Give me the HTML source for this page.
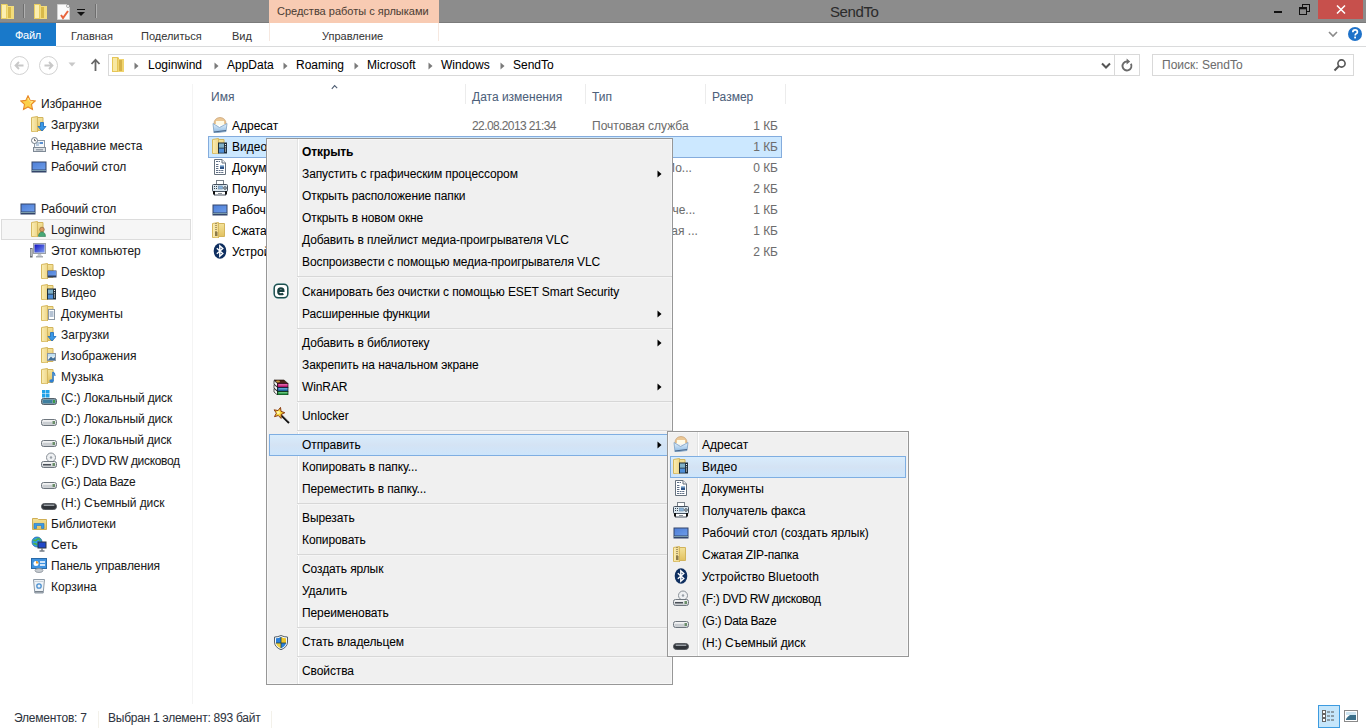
<!DOCTYPE html><html><head><meta charset="utf-8"><style>
html,body{margin:0;padding:0;width:1366px;height:728px;overflow:hidden;background:#fff;}
body{position:relative;font-family:"Liberation Sans",sans-serif;}
.t{position:absolute;white-space:nowrap;line-height:14px;font-family:"Liberation Sans",sans-serif;-webkit-text-stroke:0.05px currentColor;}
svg{display:block}
</style></head><body>
<svg width="0" height="0" style="position:absolute"><defs><linearGradient id="gF" x1="0" x2="1" y1="0" y2="0"><stop offset="0" stop-color="#fbeeb4"/><stop offset="1" stop-color="#eed68a"/></linearGradient><linearGradient id="gB" x1="0" x2="0" y1="0" y2="1"><stop offset="0" stop-color="#f3e29a"/><stop offset="1" stop-color="#e2c160"/></linearGradient><linearGradient id="gD" x1="0" x2="1" y1="0" y2="1"><stop offset="0" stop-color="#4f7fd8"/><stop offset="1" stop-color="#6c9ce8"/></linearGradient><linearGradient id="gDr" x1="0" x2="0" y1="0" y2="1"><stop offset="0" stop-color="#fafafa"/><stop offset="1" stop-color="#c4c8cc"/></linearGradient><linearGradient id="gM" x1="0" x2="0" y1="0" y2="1"><stop offset="0" stop-color="#e6f2fc"/><stop offset="1" stop-color="#86b6e2"/></linearGradient><linearGradient id="gHL" x1="0" x2="0" y1="0" y2="1"><stop offset="0" stop-color="#d8ecfc"/><stop offset=".5" stop-color="#d4e3f4"/><stop offset="1" stop-color="#cde5fb"/></linearGradient></defs></svg>
<div style="position:absolute;left:0px;top:0px;width:1366px;height:23px;background:#8c8c8c"></div>
<div style="position:absolute;left:0px;top:22px;width:1366px;height:1px;background:#7b7b7b"></div>
<svg style="position:absolute;left:0px;top:2px" width="16" height="18" viewBox="0 0 16 18"><path d="M1 2h6l1 1v14H1z" fill="#e9cf62"/><path d="M7 4h7v13H7z" fill="#f3dc7c"/><path d="M2 3h4v13H2z" fill="#fbeeb0"/><path d="M8 5h3v11H8z" fill="#d8b94a"/></svg>
<div style="position:absolute;left:23px;top:4px;width:1px;height:14px;background:#b0b0b0;border-left:1px solid #6e6e6e"></div>
<svg style="position:absolute;left:33px;top:2px" width="16" height="18" viewBox="0 0 16 18"><path d="M1 2h6l1 1v14H1z" fill="#e9cf62"/><path d="M7 4h7v13H7z" fill="#f3dc7c"/><path d="M2 3h4v13H2z" fill="#fbeeb0"/><path d="M8 5h3v11H8z" fill="#d8b94a"/></svg>
<svg style="position:absolute;left:56px;top:3px" width="16" height="18" viewBox="0 0 16 18"><path d="M1.5 1.5h9l3 3v12h-12z" fill="#fafafa" stroke="#d0d0d0"/><path d="M5 12l2 3 5-7" stroke="#e8643c" stroke-width="2" fill="none"/><circle cx="12" cy="3" r="1.5" fill="#fff" stroke="#777" stroke-width=".6"/></svg>
<svg style="position:absolute;left:77px;top:8px" width="9" height="9" viewBox="0 0 9 9"><rect x="0" y="1" width="8" height="1" fill="#111"/><path d="M0 4h8l-4 4z" fill="#111"/></svg>
<div style="position:absolute;left:95px;top:4px;width:1px;height:14px;background:#b0b0b0;border-left:1px solid #6e6e6e"></div>
<div style="position:absolute;left:269px;top:0px;width:170px;height:23px;background:#f8cbb3"></div>
<div class="t" style="left:277px;top:4px;font-size:11px;color:#4e3f36;">Средства работы с ярлыками</div>
<div class="t" style="left:830px;top:5px;font-size:15px;color:#2b2b2b;letter-spacing:-0.4px;">SendTo</div>
<div style="position:absolute;left:1274px;top:11px;width:8px;height:2px;background:#111"></div>
<svg style="position:absolute;left:1299px;top:4px" width="11" height="11" viewBox="0 0 11 11"><rect x="3.5" y="0.5" width="7" height="7" fill="none" stroke="#111"/><rect x="0.5" y="3.5" width="7" height="7" fill="#8c8c8c" stroke="#111"/><rect x="1" y="4" width="6" height="1.3" fill="#111"/></svg>
<div style="position:absolute;left:1318px;top:0px;width:45px;height:19px;background:#c7504c"></div>
<svg style="position:absolute;left:1336px;top:5px" width="10" height="9" viewBox="0 0 10 9"><path d="M1 0.5l8 8M9 0.5l-8 8" stroke="#fff" stroke-width="1.5"/></svg>
<div style="position:absolute;left:0px;top:23px;width:56px;height:23px;background:#1979ca"></div>
<div class="t" style="left:15px;top:28px;font-size:11px;color:#fff;letter-spacing:-0.3px;">Файл</div>
<div class="t" style="left:71px;top:29px;font-size:11px;color:#383838;">Главная</div>
<div class="t" style="left:141px;top:29px;font-size:11px;color:#383838;">Поделиться</div>
<div class="t" style="left:232px;top:29px;font-size:11px;color:#383838;">Вид</div>
<div class="t" style="left:322px;top:29px;font-size:11px;color:#383838;">Управление</div>
<div style="position:absolute;left:269px;top:23px;width:1px;height:18px;background:#f6e8e0"></div>
<div style="position:absolute;left:438px;top:23px;width:1px;height:18px;background:#f6e8e0"></div>
<div style="position:absolute;left:56px;top:46px;width:1310px;height:1px;background:#dadbdc"></div>
<svg style="position:absolute;left:1328px;top:31px" width="10" height="7" viewBox="0 0 10 7"><path d="M1 1l4 4 4-4" stroke="#8a8a8a" stroke-width="1.6" fill="none"/></svg>
<svg style="position:absolute;left:1347px;top:26px" width="16" height="16" viewBox="0 0 16 16"><circle cx="8" cy="8" r="7" fill="#1f72c9"/><path d="M5.8 6.2q0-2.4 2.3-2.4t2.3 2.1q0 1.2-1.3 1.9-.9.5-.9 1.7" stroke="#fff" stroke-width="1.7" fill="none"/><rect x="7.2" y="10.6" width="1.8" height="1.8" fill="#fff"/></svg>
<svg style="position:absolute;left:9px;top:55px" width="21" height="21" viewBox="0 0 21 21"><circle cx="10.5" cy="10.5" r="9" fill="none" stroke="#d2d2d2" stroke-width="1"/><path d="M14.5 10.5h-8M10 7l-3.5 3.5L10 14" stroke="#c8c8c8" stroke-width="1.8" fill="none"/></svg>
<svg style="position:absolute;left:38px;top:55px" width="21" height="21" viewBox="0 0 21 21"><circle cx="10.5" cy="10.5" r="9" fill="none" stroke="#d2d2d2" stroke-width="1"/><path d="M6.5 10.5h8M11 7l3.5 3.5L11 14" stroke="#c8c8c8" stroke-width="1.8" fill="none"/></svg>
<svg style="position:absolute;left:68px;top:62px" width="9" height="6" viewBox="0 0 9 6"><path d="M0.5 0.5h7l-3.5 4z" fill="#c8c8c8"/></svg>
<svg style="position:absolute;left:90px;top:58px" width="11" height="14" viewBox="0 0 11 14"><path d="M5.5 13V2M1.5 6l4-4.3 4 4.3" stroke="#666" stroke-width="1.8" fill="none"/></svg>
<div style="position:absolute;left:108px;top:54px;width:1032px;height:20px;border:1px solid #d9d9d9;background:#fff;box-sizing:border-box;height:22px"></div>
<div style="position:absolute;left:1114px;top:55px;width:1px;height:20px;background:#d9d9d9"></div>
<svg style="position:absolute;left:110px;top:56px" width="18" height="16" viewBox="0 0 18 16"><path d="M2 1h6l1 1v14H2z" fill="#e6c657"/><path d="M8 3h6v13H8z" fill="#f0d46e"/><path d="M3 2h4v13H3z" fill="#f8e8a2"/><path d="M9 4h3v11H9z" fill="#d5b24a"/></svg>
<svg style="position:absolute;left:134px;top:62px" width="6" height="8" viewBox="0 0 6 8"><path d="M0.5 0.5l4 3.5-4 3.5z" fill="#7a7a7a"/></svg>
<svg style="position:absolute;left:214px;top:62px" width="6" height="8" viewBox="0 0 6 8"><path d="M0.5 0.5l4 3.5-4 3.5z" fill="#7a7a7a"/></svg>
<svg style="position:absolute;left:283px;top:62px" width="6" height="8" viewBox="0 0 6 8"><path d="M0.5 0.5l4 3.5-4 3.5z" fill="#7a7a7a"/></svg>
<svg style="position:absolute;left:354px;top:62px" width="6" height="8" viewBox="0 0 6 8"><path d="M0.5 0.5l4 3.5-4 3.5z" fill="#7a7a7a"/></svg>
<svg style="position:absolute;left:428px;top:62px" width="6" height="8" viewBox="0 0 6 8"><path d="M0.5 0.5l4 3.5-4 3.5z" fill="#7a7a7a"/></svg>
<svg style="position:absolute;left:500px;top:62px" width="6" height="8" viewBox="0 0 6 8"><path d="M0.5 0.5l4 3.5-4 3.5z" fill="#7a7a7a"/></svg>
<div class="t" style="left:148px;top:58px;font-size:12px;color:#000;">Loginwind</div>
<div class="t" style="left:227px;top:58px;font-size:12px;color:#000;">AppData</div>
<div class="t" style="left:296px;top:58px;font-size:12px;color:#000;">Roaming</div>
<div class="t" style="left:367px;top:58px;font-size:12px;color:#000;">Microsoft</div>
<div class="t" style="left:441px;top:58px;font-size:12px;color:#000;">Windows</div>
<div class="t" style="left:513px;top:58px;font-size:12px;color:#000;">SendTo</div>
<svg style="position:absolute;left:1101px;top:62px" width="10" height="8" viewBox="0 0 10 8"><path d="M1 1.5l4 4 4-4" stroke="#555" stroke-width="2" fill="none"/></svg>
<svg style="position:absolute;left:1120px;top:58px" width="14" height="14" viewBox="0 0 14 14"><path d="M10.9 5.75A4.5 4.5 0 1 1 7 3.5" stroke="#6a6a6a" stroke-width="1.9" fill="none"/><path d="M6.6 0.6L10.2 3.5 6.6 6.4Z" fill="#6a6a6a"/></svg>
<div style="position:absolute;left:1152px;top:54px;width:202px;height:22px;border:1px solid #d9d9d9;box-sizing:border-box"></div>
<div class="t" style="left:1162px;top:58px;font-size:12px;color:#6d6d6d;">Поиск: SendTo</div>
<svg style="position:absolute;left:1333px;top:58px" width="14" height="14" viewBox="0 0 14 14"><circle cx="8.5" cy="5.5" r="3.6" fill="none" stroke="#555" stroke-width="1.6"/><path d="M6 8l-4.5 4.5" stroke="#555" stroke-width="2"/></svg>
<div style="position:absolute;left:192px;top:84px;width:1px;height:620px;background:#f4f4f4"></div>
<div style="position:absolute;left:1px;top:219px;width:190px;height:21px;background:#f6f6f6;border:1px solid #dcdcdc;box-sizing:border-box"></div>
<svg style="position:absolute;left:20px;top:95px" width="16" height="16" viewBox="0 0 16 16"><path d="M8 .8l2.2 4.6 5 .6-3.7 3.4 1 5L8 11.9l-4.5 2.5 1-5L.8 6l5-.6z" fill="#fcd04a" stroke="#e98a2a" stroke-width="1.1"/><path d="M8 3l1.4 3 3.2.4-2.4 2.2" fill="none" stroke="#fff3a0" stroke-width=".8"/></svg>
<div class="t" style="left:41px;top:97px;font-size:12px;color:#1a1a1a;">Избранное</div>
<svg style="position:absolute;left:31px;top:116px" width="16" height="16" viewBox="0 0 16 16"><path d="M6.5 1.5h5.5v13h-5.5z" fill="url(#gB)" stroke="#d2b45c"/><path d="M0.5 1.5l6-1v15.5l-6-.5z" fill="url(#gF)" stroke="#d6b85e"/><path d="M9.5 6.5h3v4h2.5l-4 4.5-4-4.5h2.5z" fill="#3a98e6" stroke="#1b6cc0" stroke-width=".8"/></svg>
<div class="t" style="left:51px;top:118px;font-size:12px;color:#1a1a1a;">Загрузки</div>
<svg style="position:absolute;left:31px;top:137px" width="16" height="16" viewBox="0 0 16 16"><rect x="3.5" y="3.5" width="10" height="8" fill="#f4f7fa" stroke="#8e99a5"/><path d="M5 6h4M5 8h3" stroke="#7a9cc0"/><rect x="9" y="5" width="3" height="2" fill="#5a8fd0"/><rect x="2.5" y="10.5" width="12" height="4" fill="#dde1e5" stroke="#7f8a96"/><rect x="5" y="12" width="7" height="1.5" fill="#9aa3ad"/><circle cx="3.5" cy="3.5" r="3" fill="#fff" stroke="#6f7a86"/><path d="M3.5 1.8v1.9h1.5" stroke="#444" stroke-width=".8" fill="none"/></svg>
<div class="t" style="left:51px;top:139px;font-size:12px;color:#1a1a1a;">Недавние места</div>
<svg style="position:absolute;left:31px;top:158px" width="16" height="16" viewBox="0 0 16 16"><rect x="0.5" y="3.5" width="15" height="11" fill="#33456a"/><rect x="1.5" y="4.5" width="13" height="7" fill="url(#gD)"/><rect x="1" y="12" width="14" height="1" fill="#7a9aa8"/></svg>
<div class="t" style="left:51px;top:160px;font-size:12px;color:#1a1a1a;">Рабочий стол</div>
<svg style="position:absolute;left:20px;top:200px" width="16" height="16" viewBox="0 0 16 16"><rect x="0.5" y="3.5" width="15" height="11" fill="#33456a"/><rect x="1.5" y="4.5" width="13" height="7" fill="url(#gD)"/><rect x="1" y="12" width="14" height="1" fill="#7a9aa8"/></svg>
<div class="t" style="left:41px;top:202px;font-size:12px;color:#1a1a1a;">Рабочий стол</div>
<svg style="position:absolute;left:31px;top:221px" width="16" height="16" viewBox="0 0 16 16"><path d="M6.5 1.5h5.5v13h-5.5z" fill="url(#gB)" stroke="#d2b45c"/><path d="M0.5 1.5l6-1v15.5l-6-.5z" fill="url(#gF)" stroke="#d6b85e"/><circle cx="11" cy="8.5" r="2.3" fill="#d89a60" stroke="#8a5a30" stroke-width=".6"/><path d="M7.5 15.5c0-3 1.5-4.5 3.5-4.5s3.5 1.5 3.5 4.5z" fill="#47a877" stroke="#2f7a55" stroke-width=".6"/></svg>
<div class="t" style="left:51px;top:223px;font-size:12px;color:#1a1a1a;">Loginwind</div>
<svg style="position:absolute;left:29px;top:242px" width="18" height="16" viewBox="0 0 18 16"><defs><linearGradient id="gS" x1="0" x2="1" y1="0" y2="1"><stop offset="0" stop-color="#1010c0"/><stop offset="1" stop-color="#7f9ff2"/></linearGradient></defs><rect x="4.5" y="1.5" width="12" height="10" fill="#d6dadd" stroke="#9aa0a6"/><rect x="5.5" y="2.5" width="10" height="8" fill="url(#gS)"/><path d="M9 12h3l1 2.5h-5z" fill="#c4c8cc"/><rect x="7" y="14" width="7" height="1.5" fill="#a8adb2"/><rect x="1" y="6" width="2.6" height="9.5" fill="#6a6e72"/><rect x="1.6" y="7" width="1.2" height="7" fill="#c8ccd0"/></svg>
<div class="t" style="left:51px;top:244px;font-size:12px;color:#1a1a1a;">Этот компьютер</div>
<svg style="position:absolute;left:41px;top:263px" width="16" height="16" viewBox="0 0 16 16"><path d="M6.5 1.5h5.5v13h-5.5z" fill="url(#gB)" stroke="#d2b45c"/><path d="M0.5 1.5l6-1v15.5l-6-.5z" fill="url(#gF)" stroke="#d6b85e"/><rect x="6.5" y="7.5" width="9" height="7" fill="#2e3f62"/><rect x="7" y="8" width="8" height="4.5" fill="url(#gD)"/></svg>
<div class="t" style="left:61px;top:265px;font-size:12px;color:#1a1a1a;">Desktop</div>
<svg style="position:absolute;left:41px;top:284px" width="16" height="16" viewBox="0 0 16 16"><path d="M6.5 1.5h5.5v13h-5.5z" fill="url(#gB)" stroke="#d2b45c"/><path d="M0.5 1.5l6-1v15.5l-6-.5z" fill="url(#gF)" stroke="#d6b85e"/><rect x="6" y="4.5" width="9" height="11" fill="#1f2f3a"/><rect x="7" y="5.5" width="5" height="4.2" fill="#7fb0c8"/><rect x="7" y="10.5" width="5" height="4.2" fill="#4f8fd8"/><path d="M13.5 6v1M13.5 8.2v1M13.5 10.4v1M13.5 12.6v1" stroke="#f4f4f4" stroke-width="1.1"/></svg>
<div class="t" style="left:61px;top:286px;font-size:12px;color:#1a1a1a;">Видео</div>
<svg style="position:absolute;left:41px;top:305px" width="16" height="16" viewBox="0 0 16 16"><path d="M6.5 1.5h5.5v13h-5.5z" fill="url(#gB)" stroke="#d2b45c"/><path d="M0.5 1.5l6-1v15.5l-6-.5z" fill="url(#gF)" stroke="#d6b85e"/><rect x="7.5" y="4.5" width="6" height="10" fill="#fff" stroke="#8a96a3"/><path d="M8.5 7h4M8.5 9h4M8.5 11h4" stroke="#6a86a8" stroke-width="1"/></svg>
<div class="t" style="left:61px;top:307px;font-size:12px;color:#1a1a1a;">Документы</div>
<svg style="position:absolute;left:41px;top:326px" width="16" height="16" viewBox="0 0 16 16"><path d="M6.5 1.5h5.5v13h-5.5z" fill="url(#gB)" stroke="#d2b45c"/><path d="M0.5 1.5l6-1v15.5l-6-.5z" fill="url(#gF)" stroke="#d6b85e"/><path d="M9.5 6.5h3v4h2.5l-4 4.5-4-4.5h2.5z" fill="#3a98e6" stroke="#1b6cc0" stroke-width=".8"/></svg>
<div class="t" style="left:61px;top:328px;font-size:12px;color:#1a1a1a;">Загрузки</div>
<svg style="position:absolute;left:41px;top:347px" width="16" height="16" viewBox="0 0 16 16"><path d="M6.5 1.5h5.5v13h-5.5z" fill="url(#gB)" stroke="#d2b45c"/><path d="M0.5 1.5l6-1v15.5l-6-.5z" fill="url(#gF)" stroke="#d6b85e"/><rect x="6.5" y="6.5" width="8" height="7" fill="#e8eef3" stroke="#8a96a3"/><path d="M7 13l3-3.5 2 2 2-1.5v3z" fill="#3e6f98"/><rect x="7" y="7" width="7" height="2.5" fill="#bfe0f2"/></svg>
<div class="t" style="left:61px;top:349px;font-size:12px;color:#1a1a1a;">Изображения</div>
<svg style="position:absolute;left:41px;top:368px" width="16" height="16" viewBox="0 0 16 16"><path d="M6.5 1.5h5.5v13h-5.5z" fill="url(#gB)" stroke="#d2b45c"/><path d="M0.5 1.5l6-1v15.5l-6-.5z" fill="url(#gF)" stroke="#d6b85e"/><path d="M12 4v9" stroke="#2f7fd0" stroke-width="1.6"/><ellipse cx="10.5" cy="13" rx="2.2" ry="1.7" fill="#2f7fd0"/><path d="M12 4q2 1 2 4" stroke="#2f7fd0" stroke-width="1.2" fill="none"/></svg>
<div class="t" style="left:61px;top:370px;font-size:12px;color:#1a1a1a;">Музыка</div>
<svg style="position:absolute;left:41px;top:389px" width="16" height="16" viewBox="0 0 16 16"><rect x="0.5" y="9.5" width="15" height="6" rx="2" fill="#7a9aa8" stroke="#55606a"/><rect x="2" y="11" width="9" height="3" fill="#3f7f9f"/><rect x="12" y="11" width="2" height="3" fill="#3a9a4a"/><rect x="1" y="1" width="3.5" height="3.5" fill="#22a2e8"/><rect x="5" y="1" width="3.5" height="3.5" fill="#22a2e8"/><rect x="1" y="5" width="3.5" height="3.5" fill="#22a2e8"/><rect x="5" y="5" width="3.5" height="3.5" fill="#22a2e8"/></svg>
<div class="t" style="left:61px;top:391px;font-size:12px;color:#1a1a1a;letter-spacing:-0.13px;">(C:) Локальный диск</div>
<svg style="position:absolute;left:41px;top:410px" width="16" height="16" viewBox="0 0 16 16"><rect x="0.5" y="9.5" width="15" height="6" rx="2" fill="url(#gDr)" stroke="#6e767e"/><rect x="2" y="12" width="9" height="2" fill="#c9cdd1"/><rect x="11.5" y="11" width="2.5" height="3" fill="#6b8e6b"/></svg>
<div class="t" style="left:61px;top:412px;font-size:12px;color:#1a1a1a;letter-spacing:-0.13px;">(D:) Локальный диск</div>
<svg style="position:absolute;left:41px;top:431px" width="16" height="16" viewBox="0 0 16 16"><rect x="0.5" y="9.5" width="15" height="6" rx="2" fill="url(#gDr)" stroke="#6e767e"/><rect x="2" y="12" width="9" height="2" fill="#c9cdd1"/><rect x="11.5" y="11" width="2.5" height="3" fill="#6b8e6b"/></svg>
<div class="t" style="left:61px;top:433px;font-size:12px;color:#1a1a1a;letter-spacing:-0.13px;">(E:) Локальный диск</div>
<svg style="position:absolute;left:41px;top:452px" width="16" height="16" viewBox="0 0 16 16"><circle cx="10" cy="5.5" r="4.5" fill="#eef0f2" stroke="#8a9198"/><circle cx="10" cy="5.5" r="1.2" fill="#9aa1a8"/><rect x="0.5" y="9.5" width="15" height="6" rx="2" fill="url(#gDr)" stroke="#6e767e"/><rect x="2" y="12" width="8" height="1.5" fill="#4a5058"/><rect x="11.5" y="11" width="2.5" height="3" fill="#6b8e6b"/></svg>
<div class="t" style="left:61px;top:454px;font-size:12px;color:#1a1a1a;letter-spacing:-0.32px;">(F:) DVD RW дисковод</div>
<svg style="position:absolute;left:41px;top:473px" width="16" height="16" viewBox="0 0 16 16"><rect x="0.5" y="9.5" width="15" height="6" rx="2" fill="url(#gDr)" stroke="#6e767e"/><rect x="2" y="12" width="9" height="2" fill="#c9cdd1"/><rect x="11.5" y="11" width="2.5" height="3" fill="#6b8e6b"/></svg>
<div class="t" style="left:61px;top:475px;font-size:12px;color:#1a1a1a;letter-spacing:-0.42px;">(G:) Data Baze</div>
<svg style="position:absolute;left:41px;top:494px" width="16" height="16" viewBox="0 0 16 16"><rect x="0.5" y="9.5" width="15" height="6" rx="3" fill="#2f3338" stroke="#55595e"/><rect x="2.5" y="10.5" width="11" height="1.5" rx=".7" fill="#9aa0a6"/></svg>
<div class="t" style="left:61px;top:496px;font-size:12px;color:#1a1a1a;letter-spacing:-0.08px;">(H:) Съемный диск</div>
<svg style="position:absolute;left:31px;top:515px" width="16" height="16" viewBox="0 0 16 16"><path d="M1.5 3.5h5l1 1h8v10h-14z" fill="url(#gB)" stroke="#cfae55"/><path d="M3 8.5h10v5h-2.5v-3h-5v3H3z" fill="#3a9ae6" stroke="#2373c0" stroke-width=".6"/></svg>
<div class="t" style="left:51px;top:517px;font-size:12px;color:#1a1a1a;">Библиотеки</div>
<svg style="position:absolute;left:31px;top:536px" width="16" height="16" viewBox="0 0 16 16"><circle cx="6" cy="6" r="5" fill="#2f9ee8" stroke="#246aa6" stroke-width=".8"/><path d="M2.5 4q2 1.5 3.5-.5t3.5 1M2.5 8q2-1 3.5 1" stroke="#4cb248" stroke-width="1.6" fill="none"/><rect x="6.5" y="5.5" width="9" height="7" fill="#2b3440"/><rect x="7.5" y="6.5" width="7" height="5" fill="#2048c8"/><rect x="10.5" y="12.5" width="1" height="2" fill="#2f3a48"/><rect x="8.5" y="14.5" width="5" height="1" fill="#2f3a48"/></svg>
<div class="t" style="left:51px;top:538px;font-size:12px;color:#1a1a1a;">Сеть</div>
<svg style="position:absolute;left:31px;top:557px" width="16" height="16" viewBox="0 0 16 16"><rect x="0.5" y="1.5" width="15" height="10" fill="#3f93e0" stroke="#2a6aa8"/><circle cx="5" cy="6.5" r="2.5" fill="#fff"/><path d="M5 6.5v-2.5a2.5 2.5 0 0 1 2.5 2.5z" fill="#f0a030"/><path d="M9 5h5M9 8h5" stroke="#fff" stroke-width="1.4"/><ellipse cx="8" cy="13.5" rx="4" ry="2" fill="#c8cdd2" stroke="#8a929a" stroke-width=".8"/></svg>
<div class="t" style="left:51px;top:559px;font-size:12px;color:#1a1a1a;letter-spacing:-0.07px;">Панель управления</div>
<svg style="position:absolute;left:31px;top:578px" width="16" height="16" viewBox="0 0 16 16"><path d="M2.5 1.5h11l-1.3 13.5h-8.4z" fill="#eef3f7" stroke="#8e9aa6"/><path d="M3.5 3.5h9" stroke="#c9d2da"/><circle cx="8" cy="8" r="2.2" fill="none" stroke="#4a8fd0" stroke-width="1.3"/><rect x="4" y="13" width="8" height="1.5" fill="#7a848e"/></svg>
<div class="t" style="left:51px;top:580px;font-size:12px;color:#1a1a1a;">Корзина</div>
<div class="t" style="left:211px;top:90px;font-size:12px;color:#4c607a;">Имя</div>
<div class="t" style="left:472px;top:90px;font-size:12px;color:#4c607a;">Дата изменения</div>
<div class="t" style="left:592px;top:90px;font-size:12px;color:#4c607a;">Тип</div>
<div class="t" style="left:712px;top:90px;font-size:12px;color:#4c607a;">Размер</div>
<div style="position:absolute;left:465px;top:84px;width:1px;height:20px;background:#ececec"></div>
<div style="position:absolute;left:585px;top:84px;width:1px;height:20px;background:#ececec"></div>
<div style="position:absolute;left:705px;top:84px;width:1px;height:20px;background:#ececec"></div>
<div style="position:absolute;left:785px;top:84px;width:1px;height:20px;background:#ececec"></div>
<svg style="position:absolute;left:331px;top:84px" width="7" height="6" viewBox="0 0 7 6"><path d="M0.8 4.8L3.6 1.6 6.2 4.2" stroke="#4e5d72" stroke-width="1.1" fill="none"/></svg>
<div style="position:absolute;left:208px;top:136px;width:574px;height:22px;background:#cce8ff;border:1px solid #84acdd;box-sizing:border-box"></div>
<svg style="position:absolute;left:212px;top:117px" width="16" height="16" viewBox="0 0 16 16"><path d="M2 7q0-6 6-6.5 6 .5 6 6.5" fill="#ecc896" stroke="#c9a578" stroke-width=".8"/><path d="M4 4h8v4H4z" fill="#fffbe8"/><path d="M1 6.5l6.5 4 7.5-4-1 8-12 1.5z" fill="url(#gM)" stroke="#7c9fc2" stroke-width=".8"/><path d="M2 15l12-1.5" stroke="#4a6688" stroke-width="1.2"/></svg>
<div class="t" style="left:232px;top:119px;font-size:12px;color:#000;">Адресат</div>
<svg style="position:absolute;left:212px;top:138px" width="16" height="16" viewBox="0 0 16 16"><path d="M6.5 1.5h5.5v13h-5.5z" fill="url(#gB)" stroke="#d2b45c"/><path d="M0.5 1.5l6-1v15.5l-6-.5z" fill="url(#gF)" stroke="#d6b85e"/><rect x="6" y="4.5" width="9" height="11" fill="#1f2f3a"/><rect x="7" y="5.5" width="5" height="4.2" fill="#7fb0c8"/><rect x="7" y="10.5" width="5" height="4.2" fill="#4f8fd8"/><path d="M13.5 6v1M13.5 8.2v1M13.5 10.4v1M13.5 12.6v1" stroke="#f4f4f4" stroke-width="1.1"/></svg>
<div class="t" style="left:232px;top:140px;font-size:12px;color:#000;">Видео</div>
<svg style="position:absolute;left:212px;top:159px" width="16" height="16" viewBox="0 0 16 16"><path d="M2.5 0.5H10L13.5 4V15.5H2.5Z" fill="#fff" stroke="#66717d"/><path d="M10 0.5V4H13.5" fill="#eef1f4" stroke="#66717d"/><path d="M4 2.5h4M4 5.5h3M4 7.5h3M4 9.5h3M4 11.5h8M4 13.5h8" stroke="#5f6f86" stroke-width="1" stroke-dasharray="2 .6"/><rect x="8" y="6" width="4" height="4" fill="#2f5588"/><rect x="8" y="6" width="4" height="1.5" fill="#9cc0e0"/></svg>
<div class="t" style="left:232px;top:161px;font-size:12px;color:#000;">Документы</div>
<svg style="position:absolute;left:212px;top:180px" width="16" height="16" viewBox="0 0 16 16"><rect x="4.5" y="0.5" width="7" height="4" fill="#fff" stroke="#7a828a"/><rect x="0.5" y="4.5" width="15" height="7" rx="1" fill="#dbe7ef" stroke="#46515e"/><path d="M2 6.5h1M4 6.5h1M2 8.5h1M4 8.5h1" stroke="#35414c"/><rect x="6.5" y="6" width="4" height="3" fill="#8ab4dc" stroke="#5a7a98" stroke-width=".5"/><circle cx="13" cy="8" r="1.3" fill="none" stroke="#35414c" stroke-width=".9"/><rect x="2.5" y="11.5" width="11" height="3.5" fill="#fff" stroke="#46515e"/><rect x="1" y="11" width="2" height="3.5" fill="#111"/><rect x="13" y="11" width="2" height="3.5" fill="#111"/><path d="M6 13.5h4" stroke="#8a929a"/></svg>
<div class="t" style="left:232px;top:182px;font-size:12px;color:#000;">Получатель факса</div>
<svg style="position:absolute;left:212px;top:201px" width="16" height="16" viewBox="0 0 16 16"><rect x="0.5" y="3.5" width="15" height="11" fill="#33456a"/><rect x="1.5" y="4.5" width="13" height="7" fill="url(#gD)"/><rect x="1" y="12" width="14" height="1" fill="#7a9aa8"/></svg>
<div class="t" style="left:232px;top:203px;font-size:12px;color:#000;">Рабочий стол (создать ярлык)</div>
<svg style="position:absolute;left:212px;top:222px" width="16" height="16" viewBox="0 0 16 16"><path d="M6.5 1.5h6v13h-6z" fill="url(#gB)" stroke="#d2b45c"/><path d="M0.5 1.5l6-1v15.5l-6-.5z" fill="url(#gF)" stroke="#d6b85e"/><path d="M4 1v9" stroke="#7a6a48" stroke-width="1.2" stroke-dasharray="1 1"/><rect x="3" y="10" width="2.5" height="4" fill="#8b7a4a"/></svg>
<div class="t" style="left:232px;top:224px;font-size:12px;color:#000;letter-spacing:-0.2px;">Сжатая ZIP-папка</div>
<svg style="position:absolute;left:212px;top:243px" width="16" height="16" viewBox="0 0 16 16"><ellipse cx="8" cy="8" rx="6.3" ry="7.7" fill="#0f2f60"/><path d="M4.8 5.2l6 5.3-3 2.7V2.8l3 2.7-6 5.3" fill="none" stroke="#fff" stroke-width="1.4"/></svg>
<div class="t" style="left:232px;top:245px;font-size:12px;color:#000;">Устройство Bluetooth</div>
<div class="t" style="left:472px;top:119px;font-size:12px;color:#6d6d6d;letter-spacing:-0.6px;">22.08.2013 21:34</div>
<div class="t" style="left:592px;top:119px;font-size:12px;color:#6d6d6d;">Почтовая служба</div>
<div class="t" style="left:665px;top:161px;font-size:12px;color:#6d6d6d;">Мо...</div>
<div class="t" style="left:666px;top:203px;font-size:12px;color:#6d6d6d;">оче...</div>
<div class="t" style="left:666px;top:224px;font-size:12px;color:#6d6d6d;">тая ...</div>
<div class="t" style="left:700px;width:78px;text-align:right;top:119px;font-size:12px;color:#6d6d6d">1 КБ</div>
<div class="t" style="left:700px;width:78px;text-align:right;top:140px;font-size:12px;color:#6d6d6d">1 КБ</div>
<div class="t" style="left:700px;width:78px;text-align:right;top:161px;font-size:12px;color:#6d6d6d">0 КБ</div>
<div class="t" style="left:700px;width:78px;text-align:right;top:182px;font-size:12px;color:#6d6d6d">2 КБ</div>
<div class="t" style="left:700px;width:78px;text-align:right;top:203px;font-size:12px;color:#6d6d6d">1 КБ</div>
<div class="t" style="left:700px;width:78px;text-align:right;top:224px;font-size:12px;color:#6d6d6d">1 КБ</div>
<div class="t" style="left:700px;width:78px;text-align:right;top:245px;font-size:12px;color:#6d6d6d">2 КБ</div>
<div style="position:absolute;left:266px;top:138px;width:407px;height:547px;background:#f0f0f0;border:1px solid #979797;box-sizing:border-box;box-shadow:inset 0 0 0 1px #f7f7f7"></div>
<div style="position:absolute;left:297px;top:139px;width:1px;height:545px;background:#e2e3e3"></div>
<div style="position:absolute;left:298px;top:139px;width:1px;height:545px;background:#ffffff"></div>
<div style="position:absolute;left:269px;top:434px;width:403px;height:22px;background:linear-gradient(#d8ecfc,#d4e3f4 50%,#cde5fb);border:1px solid #7eaee2;box-sizing:border-box"></div>
<div class="t" style="left:302px;top:145px;font-size:12px;color:#000;font-weight:bold;letter-spacing:-0.1px;">Открыть</div>
<div class="t" style="left:302px;top:167px;font-size:12px;color:#000;letter-spacing:-0.1px;">Запустить с графическим процессором</div>
<svg style="position:absolute;left:657px;top:170px" width="5" height="8" viewBox="0 0 5 8"><path d="M0.5 0.5l4 3.5-4 3.5z" fill="#000"/></svg>
<div class="t" style="left:302px;top:189px;font-size:12px;color:#000;letter-spacing:-0.1px;">Открыть расположение папки</div>
<div class="t" style="left:302px;top:211px;font-size:12px;color:#000;letter-spacing:-0.1px;">Открыть в новом окне</div>
<div class="t" style="left:302px;top:233px;font-size:12px;color:#000;letter-spacing:-0.1px;">Добавить в плейлист медиа-проигрывателя VLC</div>
<div class="t" style="left:302px;top:255px;font-size:12px;color:#000;letter-spacing:-0.1px;">Воспроизвести с помощью медиа-проигрывателя VLC</div>
<div class="t" style="left:302px;top:285px;font-size:12px;color:#000;letter-spacing:-0.1px;">Сканировать без очистки с помощью ESET Smart Security</div>
<svg style="position:absolute;left:273px;top:283px" width="16" height="16" viewBox="0 0 16 16"><rect x="0.5" y="0.5" width="15" height="15" rx="4.5" fill="#effafa" stroke="#d2f2f2" stroke-width="1"/><rect x="1.2" y="1.2" width="13.6" height="13.6" rx="4" fill="#fff" stroke="#1f4f4f" stroke-width="1.5"/><path d="M5.3 7.9h5.2q0-2.6-2.6-2.6-2.7 0-2.7 3.1 0 2.9 2.8 2.9 1.4 0 2.3-.7" fill="none" stroke="#173f3f" stroke-width="2.1"/></svg>
<div class="t" style="left:302px;top:307px;font-size:12px;color:#000;letter-spacing:-0.1px;">Расширенные функции</div>
<svg style="position:absolute;left:657px;top:310px" width="5" height="8" viewBox="0 0 5 8"><path d="M0.5 0.5l4 3.5-4 3.5z" fill="#000"/></svg>
<div class="t" style="left:302px;top:336px;font-size:12px;color:#000;letter-spacing:-0.1px;">Добавить в библиотеку</div>
<svg style="position:absolute;left:657px;top:339px" width="5" height="8" viewBox="0 0 5 8"><path d="M0.5 0.5l4 3.5-4 3.5z" fill="#000"/></svg>
<div class="t" style="left:302px;top:358px;font-size:12px;color:#000;letter-spacing:-0.1px;">Закрепить на начальном экране</div>
<div class="t" style="left:302px;top:380px;font-size:12px;color:#000;letter-spacing:-0.1px;">WinRAR</div>
<svg style="position:absolute;left:273px;top:379px" width="16" height="16" viewBox="0 0 16 16"><path d="M1 1h10l4 3.5H5z" fill="#4a2418" stroke="#1a0a05" stroke-width=".6"/><ellipse cx="5" cy="2.6" rx="2" ry="1" fill="#c89a40"/><path d="M1 1.5L4.5 4.5V8L1 5z M1 5.5L4.5 8.5V12L1 9z M1 9.5L4.5 12.5V16L1 13z" fill="#fafafa" stroke="#111" stroke-width=".7"/><rect x="4.5" y="4.5" width="10.5" height="4" fill="#b3186a" stroke="#2a0a18" stroke-width=".7"/><rect x="5.5" y="5.3" width="9" height="1.1" fill="#f27abf"/><rect x="4.5" y="8.5" width="10.5" height="4" fill="#1d5c9c" stroke="#0a1a2a" stroke-width=".7"/><rect x="5.5" y="9.3" width="9" height="1.1" fill="#7cc0ec"/><rect x="4.5" y="12.5" width="10.5" height="3.5" fill="#1e8a3c" stroke="#0a2a10" stroke-width=".7"/><rect x="5.5" y="13.2" width="9" height="1.1" fill="#78d48a"/></svg>
<svg style="position:absolute;left:657px;top:383px" width="5" height="8" viewBox="0 0 5 8"><path d="M0.5 0.5l4 3.5-4 3.5z" fill="#000"/></svg>
<div class="t" style="left:302px;top:409px;font-size:12px;color:#000;letter-spacing:-0.1px;">Unlocker</div>
<svg style="position:absolute;left:271px;top:405px" width="20" height="20" viewBox="0 0 20 20"><path d="M9.5 9.5L18 18" stroke="#0e0e0e" stroke-width="1.9"/><path d="M11 10l6.5 6.5" stroke="#9a9a9a" stroke-width=".6"/><path d="M9.50,2.40 L10.02,6.36 L13.79,7.70 L10.18,9.42 L10.08,13.41 L7.33,10.51 L3.49,11.65 L5.40,8.14 L3.14,4.84 L7.07,5.57Z" fill="#f8d53a" stroke="#8a3a12" stroke-width="1"/><circle cx="7.3" cy="7.5" r="1.6" fill="#fff7a8"/></svg>
<div class="t" style="left:302px;top:438px;font-size:12px;color:#000;letter-spacing:-0.1px;">Отправить</div>
<svg style="position:absolute;left:657px;top:441px" width="5" height="8" viewBox="0 0 5 8"><path d="M0.5 0.5l4 3.5-4 3.5z" fill="#000"/></svg>
<div class="t" style="left:302px;top:460px;font-size:12px;color:#000;letter-spacing:-0.1px;">Копировать в папку...</div>
<div class="t" style="left:302px;top:482px;font-size:12px;color:#000;letter-spacing:-0.1px;">Переместить в папку...</div>
<div class="t" style="left:302px;top:511px;font-size:12px;color:#000;letter-spacing:-0.1px;">Вырезать</div>
<div class="t" style="left:302px;top:533px;font-size:12px;color:#000;letter-spacing:-0.1px;">Копировать</div>
<div class="t" style="left:302px;top:562px;font-size:12px;color:#000;letter-spacing:-0.1px;">Создать ярлык</div>
<div class="t" style="left:302px;top:584px;font-size:12px;color:#000;letter-spacing:-0.1px;">Удалить</div>
<div class="t" style="left:302px;top:606px;font-size:12px;color:#000;letter-spacing:-0.1px;">Переименовать</div>
<div class="t" style="left:302px;top:635px;font-size:12px;color:#000;letter-spacing:-0.1px;">Стать владельцем</div>
<svg style="position:absolute;left:273px;top:634px" width="16" height="16" viewBox="0 0 16 16"><path d="M8 1.5Q11 3 14.5 3V8Q14.5 13 8 15.8 1.5 13 1.5 8V3Q5 3 8 1.5Z" fill="#f4f8fb" stroke="#55606a" stroke-width="1"/><path d="M8 3Q5.5 4.2 3 4.3V9H8Z" fill="#2a7fd8"/><path d="M8 3Q10.5 4.2 13 4.3V9H8Z" fill="#f0c62a"/><path d="M3 9H8V14.3Q3.5 12.3 3 9Z" fill="#f0d040"/><path d="M8 9H13Q12.5 12.3 8 14.3Z" fill="#2a7fd8"/><path d="M8 3V14.3M3 9H13" stroke="#27433a" stroke-width=".8"/></svg>
<div class="t" style="left:302px;top:664px;font-size:12px;color:#000;letter-spacing:-0.1px;">Свойства</div>
<div style="position:absolute;left:297px;top:276px;width:375px;height:1px;background:#d7d7d7"></div>
<div style="position:absolute;left:297px;top:277px;width:375px;height:1px;background:#f5f5f5"></div>
<div style="position:absolute;left:297px;top:328px;width:375px;height:1px;background:#d7d7d7"></div>
<div style="position:absolute;left:297px;top:329px;width:375px;height:1px;background:#f5f5f5"></div>
<div style="position:absolute;left:297px;top:401px;width:375px;height:1px;background:#d7d7d7"></div>
<div style="position:absolute;left:297px;top:402px;width:375px;height:1px;background:#f5f5f5"></div>
<div style="position:absolute;left:297px;top:430px;width:375px;height:1px;background:#d7d7d7"></div>
<div style="position:absolute;left:297px;top:431px;width:375px;height:1px;background:#f5f5f5"></div>
<div style="position:absolute;left:297px;top:503px;width:375px;height:1px;background:#d7d7d7"></div>
<div style="position:absolute;left:297px;top:504px;width:375px;height:1px;background:#f5f5f5"></div>
<div style="position:absolute;left:297px;top:554px;width:375px;height:1px;background:#d7d7d7"></div>
<div style="position:absolute;left:297px;top:555px;width:375px;height:1px;background:#f5f5f5"></div>
<div style="position:absolute;left:297px;top:627px;width:375px;height:1px;background:#d7d7d7"></div>
<div style="position:absolute;left:297px;top:628px;width:375px;height:1px;background:#f5f5f5"></div>
<div style="position:absolute;left:297px;top:656px;width:375px;height:1px;background:#d7d7d7"></div>
<div style="position:absolute;left:297px;top:657px;width:375px;height:1px;background:#f5f5f5"></div>
<div style="position:absolute;left:667px;top:431px;width:242px;height:226px;background:#f0f0f0;border:1px solid #979797;box-sizing:border-box;box-shadow:inset 0 0 0 1px #f7f7f7"></div>
<div style="position:absolute;left:697px;top:432px;width:1px;height:224px;background:#e2e3e3"></div>
<div style="position:absolute;left:698px;top:432px;width:1px;height:224px;background:#ffffff"></div>
<div style="position:absolute;left:670px;top:456px;width:236px;height:22px;background:linear-gradient(#d8ecfc,#d4e3f4 50%,#cde5fb);border:1px solid #7eaee2;box-sizing:border-box"></div>
<svg style="position:absolute;left:673px;top:436px" width="16" height="16" viewBox="0 0 16 16"><path d="M2 7q0-6 6-6.5 6 .5 6 6.5" fill="#ecc896" stroke="#c9a578" stroke-width=".8"/><path d="M4 4h8v4H4z" fill="#fffbe8"/><path d="M1 6.5l6.5 4 7.5-4-1 8-12 1.5z" fill="url(#gM)" stroke="#7c9fc2" stroke-width=".8"/><path d="M2 15l12-1.5" stroke="#4a6688" stroke-width="1.2"/></svg>
<div class="t" style="left:702px;top:438px;font-size:12px;color:#000;">Адресат</div>
<svg style="position:absolute;left:673px;top:458px" width="16" height="16" viewBox="0 0 16 16"><path d="M6.5 1.5h5.5v13h-5.5z" fill="url(#gB)" stroke="#d2b45c"/><path d="M0.5 1.5l6-1v15.5l-6-.5z" fill="url(#gF)" stroke="#d6b85e"/><rect x="6" y="4.5" width="9" height="11" fill="#1f2f3a"/><rect x="7" y="5.5" width="5" height="4.2" fill="#7fb0c8"/><rect x="7" y="10.5" width="5" height="4.2" fill="#4f8fd8"/><path d="M13.5 6v1M13.5 8.2v1M13.5 10.4v1M13.5 12.6v1" stroke="#f4f4f4" stroke-width="1.1"/></svg>
<div class="t" style="left:702px;top:460px;font-size:12px;color:#000;">Видео</div>
<svg style="position:absolute;left:673px;top:480px" width="16" height="16" viewBox="0 0 16 16"><path d="M2.5 0.5H10L13.5 4V15.5H2.5Z" fill="#fff" stroke="#66717d"/><path d="M10 0.5V4H13.5" fill="#eef1f4" stroke="#66717d"/><path d="M4 2.5h4M4 5.5h3M4 7.5h3M4 9.5h3M4 11.5h8M4 13.5h8" stroke="#5f6f86" stroke-width="1" stroke-dasharray="2 .6"/><rect x="8" y="6" width="4" height="4" fill="#2f5588"/><rect x="8" y="6" width="4" height="1.5" fill="#9cc0e0"/></svg>
<div class="t" style="left:702px;top:482px;font-size:12px;color:#000;">Документы</div>
<svg style="position:absolute;left:673px;top:502px" width="16" height="16" viewBox="0 0 16 16"><rect x="4.5" y="0.5" width="7" height="4" fill="#fff" stroke="#7a828a"/><rect x="0.5" y="4.5" width="15" height="7" rx="1" fill="#dbe7ef" stroke="#46515e"/><path d="M2 6.5h1M4 6.5h1M2 8.5h1M4 8.5h1" stroke="#35414c"/><rect x="6.5" y="6" width="4" height="3" fill="#8ab4dc" stroke="#5a7a98" stroke-width=".5"/><circle cx="13" cy="8" r="1.3" fill="none" stroke="#35414c" stroke-width=".9"/><rect x="2.5" y="11.5" width="11" height="3.5" fill="#fff" stroke="#46515e"/><rect x="1" y="11" width="2" height="3.5" fill="#111"/><rect x="13" y="11" width="2" height="3.5" fill="#111"/><path d="M6 13.5h4" stroke="#8a929a"/></svg>
<div class="t" style="left:702px;top:504px;font-size:12px;color:#000;">Получатель факса</div>
<svg style="position:absolute;left:673px;top:524px" width="16" height="16" viewBox="0 0 16 16"><rect x="0.5" y="3.5" width="15" height="11" fill="#33456a"/><rect x="1.5" y="4.5" width="13" height="7" fill="url(#gD)"/><rect x="1" y="12" width="14" height="1" fill="#7a9aa8"/></svg>
<div class="t" style="left:702px;top:526px;font-size:12px;color:#000;">Рабочий стол (создать ярлык)</div>
<svg style="position:absolute;left:673px;top:546px" width="16" height="16" viewBox="0 0 16 16"><path d="M6.5 1.5h6v13h-6z" fill="url(#gB)" stroke="#d2b45c"/><path d="M0.5 1.5l6-1v15.5l-6-.5z" fill="url(#gF)" stroke="#d6b85e"/><path d="M4 1v9" stroke="#7a6a48" stroke-width="1.2" stroke-dasharray="1 1"/><rect x="3" y="10" width="2.5" height="4" fill="#8b7a4a"/></svg>
<div class="t" style="left:702px;top:548px;font-size:12px;color:#000;letter-spacing:-0.2px;">Сжатая ZIP-папка</div>
<svg style="position:absolute;left:673px;top:568px" width="16" height="16" viewBox="0 0 16 16"><ellipse cx="8" cy="8" rx="6.3" ry="7.7" fill="#0f2f60"/><path d="M4.8 5.2l6 5.3-3 2.7V2.8l3 2.7-6 5.3" fill="none" stroke="#fff" stroke-width="1.4"/></svg>
<div class="t" style="left:702px;top:570px;font-size:12px;color:#000;">Устройство Bluetooth</div>
<svg style="position:absolute;left:673px;top:590px" width="16" height="16" viewBox="0 0 16 16"><circle cx="10" cy="5.5" r="4.5" fill="#eef0f2" stroke="#8a9198"/><circle cx="10" cy="5.5" r="1.2" fill="#9aa1a8"/><rect x="0.5" y="9.5" width="15" height="6" rx="2" fill="url(#gDr)" stroke="#6e767e"/><rect x="2" y="12" width="8" height="1.5" fill="#4a5058"/><rect x="11.5" y="11" width="2.5" height="3" fill="#6b8e6b"/></svg>
<div class="t" style="left:702px;top:592px;font-size:12px;color:#000;letter-spacing:-0.32px;">(F:) DVD RW дисковод</div>
<svg style="position:absolute;left:673px;top:612px" width="16" height="16" viewBox="0 0 16 16"><rect x="0.5" y="9.5" width="15" height="6" rx="2" fill="url(#gDr)" stroke="#6e767e"/><rect x="2" y="12" width="9" height="2" fill="#c9cdd1"/><rect x="11.5" y="11" width="2.5" height="3" fill="#6b8e6b"/></svg>
<div class="t" style="left:702px;top:614px;font-size:12px;color:#000;letter-spacing:-0.42px;">(G:) Data Baze</div>
<svg style="position:absolute;left:673px;top:634px" width="16" height="16" viewBox="0 0 16 16"><rect x="0.5" y="9.5" width="15" height="6" rx="3" fill="#2f3338" stroke="#55595e"/><rect x="2.5" y="10.5" width="11" height="1.5" rx=".7" fill="#9aa0a6"/></svg>
<div class="t" style="left:702px;top:636px;font-size:12px;color:#000;letter-spacing:-0.08px;">(H:) Съемный диск</div>
<div class="t" style="left:14px;top:711px;font-size:12px;color:#2e3440;letter-spacing:-0.2px;">Элементов: 7</div>
<div style="position:absolute;left:98px;top:711px;width:1px;height:17px;background:#f3f1ea"></div>
<div style="position:absolute;left:271px;top:711px;width:1px;height:17px;background:#f3f1ea"></div>
<div class="t" style="left:108px;top:711px;font-size:12px;color:#2e3440;letter-spacing:-0.25px;">Выбран 1 элемент: 893 байт</div>
<div style="position:absolute;left:1318px;top:705px;width:22px;height:23px;background:#c5e6fb;border:1px solid #3d9be0;box-sizing:border-box"></div>
<svg style="position:absolute;left:1322px;top:710px" width="14" height="12" viewBox="0 0 14 12"><rect x="0.5" y="0.5" width="3" height="3" fill="#fff" stroke="#666"/><rect x="0.5" y="4.5" width="3" height="3" fill="#fff" stroke="#666"/><rect x="0.5" y="8.5" width="3" height="3" fill="#fff" stroke="#666"/><path d="M5 2h8M5 6h8M5 10h8" stroke="#555" stroke-width="1" stroke-dasharray="3 1"/></svg>
<svg style="position:absolute;left:1344px;top:710px" width="14" height="12" viewBox="0 0 14 12"><rect x="0.5" y="0.5" width="13" height="11" fill="#fff" stroke="#8a8a8a"/><path d="M2 9q3-5 10-6v7H2z" fill="#3a6f8a"/><rect x="2" y="2" width="10" height="3" fill="#cfe6f2"/></svg>
</body></html>
